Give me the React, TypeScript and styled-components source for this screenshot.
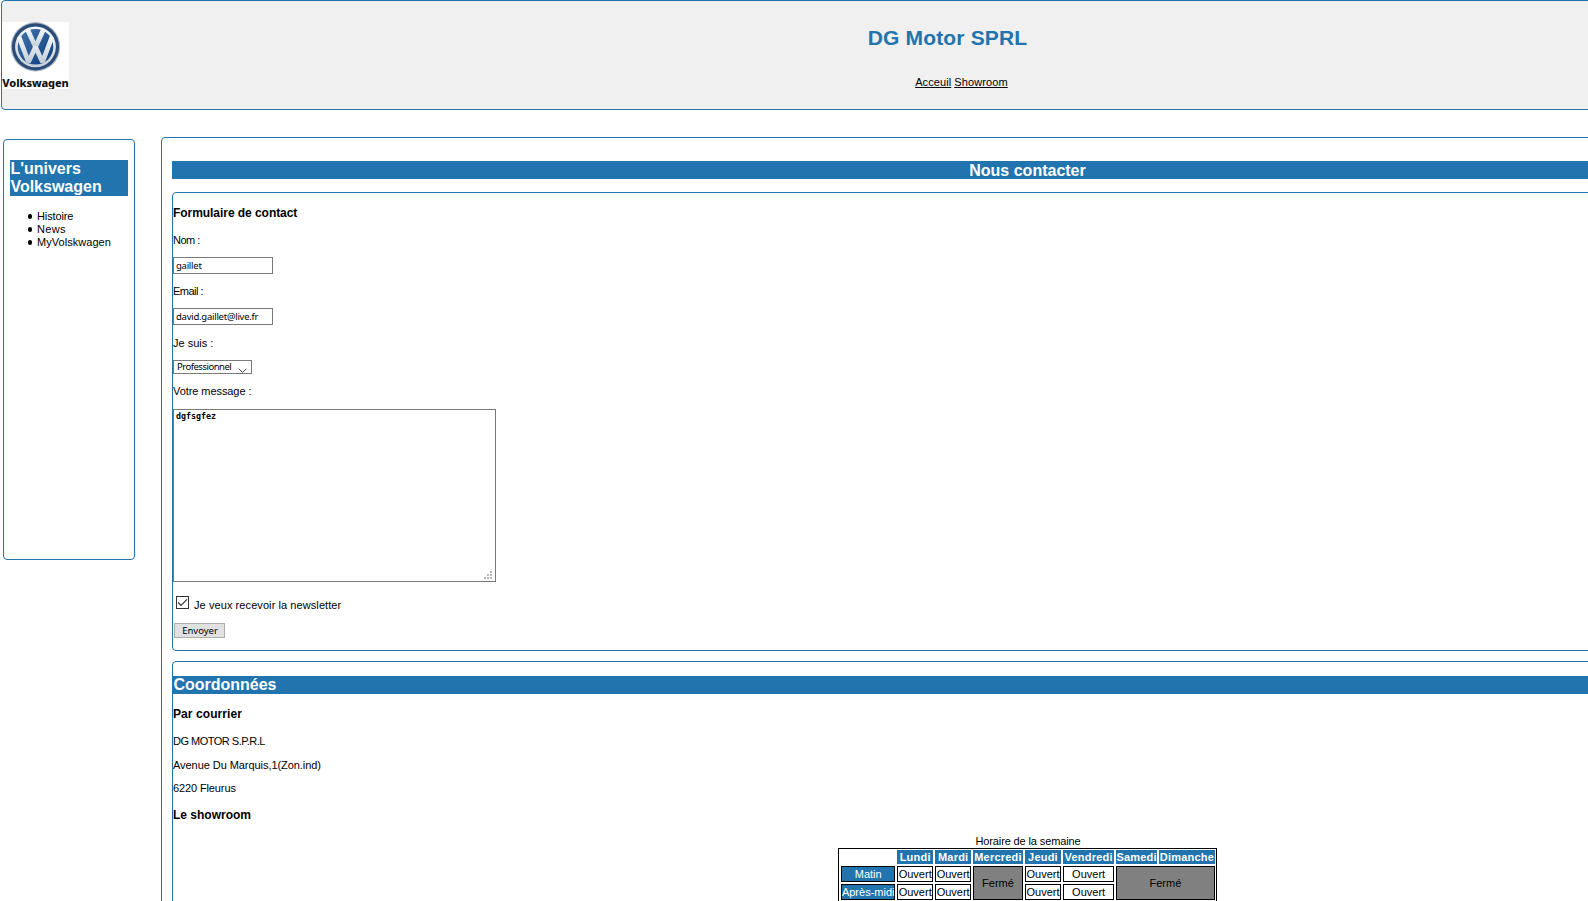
import React from "react";
import styled, { createGlobalStyle } from "styled-components";

const BLUE = "#2174ad";

const GlobalStyle = createGlobalStyle`
  * { box-sizing: border-box; }
  html, body { margin: 0; padding: 0; background: #fff; overflow: hidden; }
  body { font-family: "Liberation Sans", Arial, sans-serif; font-size: 11px; line-height: 12px; color: #000; }
`;

const Page = styled.div`
  width: 100%;
  height: 901px;
  overflow: hidden;
`;

const Header = styled.header`
  display: flex;
  width: 1892px;
  height: 110px;
  margin-left: 1px;
  border: 1px solid ${BLUE};
  border-radius: 4px;
  background: #f0f0f0;
`;

const Logo = styled.svg`
  flex: none;
  display: block;
  width: 67px;
  height: 67px;
  margin-top: 21px;
`;

const HeaderText = styled.div`
  display: flex;
  flex-direction: column;
  align-items: center;
  flex: 1;
  margin-right: 67px;
`;

const SiteTitle = styled.h1<{ $track?: number }>`
  margin: 25px 0 0 1px;
  font-size: 21px;
  line-height: 24px;
  letter-spacing: ${(p) => p.$track ?? 0}px;
  color: ${BLUE};
`;

const Nav = styled.nav`
  display: flex;
  gap: 3px;
  margin: 26px 0 0 29px;
`;

const NavLink = styled.a<{ $track?: number }>`
  color: #000;
  text-decoration: underline;
  letter-spacing: ${(p) => p.$track ?? 0}px;
`;

const Columns = styled.div`
  display: flex;
  align-items: flex-start;
  width: 1893px;
  padding: 27px 0 0 3px;
`;

const Sidebar = styled.aside`
  flex: none;
  width: 132px;
  height: 421px;
  margin: 2px 26px 0 0;
  padding: 20px 6px;
  border: 1px solid ${BLUE};
  border-radius: 4px;
`;

const BarTitle = styled.h2<{ $center?: boolean }>`
  margin: 0;
  padding: ${(p) => (p.$center ? "1px 0 0 1px" : "0 0 0 0.4px")};
  background: ${BLUE};
  color: #fff;
  font-size: 16px;
  line-height: ${(p) => (p.$center ? 17 : 18)}px;
  text-align: ${(p) => (p.$center ? "center" : "left")};
`;

const LinkList = styled.ul`
  margin: 14px 0 0;
  padding: 0 0 0 18px;
  line-height: 13px;
  list-style: none;
`;

const LinkItem = styled.li<{ $track: number }>`
  display: flex;
  align-items: center;
  gap: 4.6px;
  letter-spacing: ${(p) => p.$track}px;
  &::before {
    content: "";
    width: 4.4px;
    height: 4.4px;
    border-radius: 50%;
    background: #000;
  }
`;

const Main = styled.main`
  flex: none;
  width: 1732px;
  height: 900px;
  padding: 23px 10px 0;
  border: 1px solid ${BLUE};
  border-radius: 4px;
`;

const Panel = styled.section<{ $top: number; $height: number }>`
  display: flex;
  flex-direction: column;
  align-items: flex-start;
  height: ${(p) => p.$height}px;
  margin-top: ${(p) => p.$top}px;
  border: 1px solid ${BLUE};
  border-radius: 4px;
  > h2 { align-self: stretch; margin-top: 14px; }
`;

const SubTitle = styled.h4<{ $track?: number; $top?: number; $bottom?: number }>`
  margin: ${(p) => p.$top ?? 13}px 0 ${(p) => p.$bottom ?? 14}px;
  font-size: 12px;
  line-height: 14px;
  letter-spacing: ${(p) => p.$track ?? 0}px;
`;

const Label = styled.label<{ $track?: number; $top?: number; $bottom?: number }>`
  display: block;
  margin: ${(p) => p.$top ?? 0}px 0 ${(p) => p.$bottom ?? 11}px;
  letter-spacing: ${(p) => p.$track ?? 0}px;
`;

const Field = styled.input`
  display: block;
  width: 100px;
  height: 17px;
  padding: 0 2px 1px;
  border: 1px solid #7a7a7a;
  background: #fff;
  font: 9.5px "Noto Sans", sans-serif;
  letter-spacing: -0.25px;
  color: #000;
`;

const SelectBox = styled.div`
  display: flex;
  align-items: center;
  justify-content: space-between;
  width: 79px;
  height: 14px;
  padding: 0 4px 0 3px;
  border: 1px solid #7a7a7a;
  font: 9.5px/12px "Noto Sans", sans-serif;
  letter-spacing: -0.5px;
  svg { margin: 8px 0 0; }
`;

const Message = styled.div`
  display: flex;
  justify-content: space-between;
  width: 323px;
  height: 173px;
  padding: 1px 3px 2px 2px;
  border: 1px solid #7a7a7a;
  font: bold 8.3px/10px "DejaVu Sans Mono", monospace;
  svg { align-self: flex-end; }
`;

const CheckRow = styled.label`
  display: flex;
  gap: 5px;
  margin: 14px 0 0 3px;
  height: 13px;
  letter-spacing: 0.08px;
  span { margin-top: 3px; }
`;

const SubmitButton = styled.button`
  width: 51px;
  height: 15px;
  margin: 14px 0 0 1px;
  padding: 0 0 0 1px;
  border: 1px solid #adadad;
  background: #e1e1e1;
  font: 9.5px/13px "Noto Sans", sans-serif;
  color: #000;
`;

const Line = styled.p<{ $bottom?: number; $track?: number }>`
  margin: 0 0 ${(p) => p.$bottom ?? 0}px;
  letter-spacing: ${(p) => p.$track ?? 0}px;
`;

const Schedule = styled.div`
  align-self: center;
  width: 379px;
  margin-left: 1px;
`;

const Caption = styled.div`
  margin-bottom: 1px;
  padding-left: 1px;
  text-align: center;
  letter-spacing: -0.12px;
`;

const Grid = styled.div`
  display: grid;
  grid-template-columns: 54.4px 36.4px 36.4px 50.1px 36.7px 51.4px 41.4px 56px;
  grid-template-rows: 14px 16px 16px;
  gap: 2px 1.6px;
  width: 379px;
  padding: 1px 1px 1px 2px;
  border: 1px solid #000;
`;

const Cell = styled.div<{ $kind?: "day" | "slot" | "closed"; $cols?: number }>`
  display: flex;
  align-items: center;
  justify-content: center;
  min-width: 0;
  white-space: nowrap;
  border: ${(p) => (p.$kind === "day" ? "0" : "1px solid #000")};
  background: ${(p) => (p.$kind === "closed" ? "#808080" : p.$kind ? BLUE : "#fff")};
  color: ${(p) => (p.$kind === "day" || p.$kind === "slot" ? "#fff" : "#000")};
  font-weight: ${(p) => (p.$kind === "day" ? 700 : 400)};
  letter-spacing: ${(p) => (p.$kind === "day" ? 0.22 : 0)}px;
  grid-column: span ${(p) => p.$cols ?? 1};
  grid-row: span ${(p) => (p.$kind === "closed" ? 2 : 1)};
`;

const DAYS = ["Lundi", "Mardi", "Mercredi", "Jeudi", "Vendredi", "Samedi", "Dimanche"];

export default function App() {
  return (
    <Page>
      <GlobalStyle />
      <Header>
        <Logo viewBox="0 0 67 67">
          <defs>
            <linearGradient id="disc" x1="0" y1="0" x2="1" y2="1">
              <stop offset="0" stopColor="#4274ae" />
              <stop offset="1" stopColor="#0d3d7c" />
            </linearGradient>
            <linearGradient id="chrome" x1="0" y1="0" x2="0" y2="1">
              <stop offset="0" stopColor="#f4f7fa" />
              <stop offset="1" stopColor="#c3ced9" />
            </linearGradient>
          </defs>
          <rect width="67" height="67" fill="#fff" />
          <circle cx="33.5" cy="24.8" r="24.7" fill="#aab4c2" />
          <circle cx="33.5" cy="24.8" r="23.6" fill="#2b4b78" />
          <circle cx="33.5" cy="24.8" r="20.4" fill="url(#chrome)" />
          <circle cx="33.5" cy="24.8" r="17.8" fill="url(#disc)" />
          <g fill="none" stroke="url(#chrome)" strokeWidth="4.8" strokeLinejoin="bevel">
            <path d="M25.5 7.5 L33.5 25 L41.5 7.5" />
            <path d="M17 15 L26.5 40 L33.5 25 L40.5 40 L50 15" />
          </g>
          <text x="0.3" y="64.6" textLength="66.5" fontFamily="Noto Sans" fontWeight="800" fontSize="11" fill="#111">Volkswagen</text>
        </Logo>
        <HeaderText>
          <SiteTitle $track={0.17}>DG Motor SPRL</SiteTitle>
          <Nav>
            <NavLink $track={0.08}>Acceuil</NavLink>
            <NavLink $track={0.12}>Showroom</NavLink>
          </Nav>
        </HeaderText>
      </Header>
      <Columns>
        <Sidebar>
          <BarTitle>L'univers Volkswagen</BarTitle>
          <LinkList>
            <LinkItem $track={-0.12}>Histoire</LinkItem>
            <LinkItem $track={0.3}>News</LinkItem>
            <LinkItem $track={0.05}>MyVolskwagen</LinkItem>
          </LinkList>
        </Sidebar>
        <Main>
          <BarTitle $center>Nous contacter</BarTitle>
          <Panel $top={13} $height={459}>
            <SubTitle $track={-0.05}>Formulaire de contact</SubTitle>
            <Label $track={-0.5}>Nom :</Label>
            <Field defaultValue="gaillet" />
            <Label $top={11} $track={-0.5}>Email :</Label>
            <Field defaultValue="david.gaillet@live.fr" />
            <Label $top={12}>Je suis :</Label>
            <SelectBox>
              Professionnel
              <svg width="9" height="6" viewBox="0 0 9 6">
                <path d="M0.7 0.7 L4.5 4.5 L8.3 0.7" fill="none" stroke="#444" />
              </svg>
            </SelectBox>
            <Label $top={11} $bottom={12} $track={-0.07}>Votre message :</Label>
            <Message>
              dgfsgfez
              <svg width="8" height="8" viewBox="0 0 8 8" fill="#b8b8b8">
                <path d="M6 0h2v2h-2zM3 3h2v2h-2zM6 3h2v2h-2zM0 6h2v2h-2zM3 6h2v2h-2zM6 6h2v2h-2z" />
              </svg>
            </Message>
            <CheckRow>
              <svg width="13" height="13" viewBox="0 0 13 13" fill="none" stroke="#333">
                <rect x="0.5" y="0.5" width="12" height="12" />
                <path d="M2 6.5 L5 9.5 L11 3.3" strokeWidth="1.2" />
              </svg>
              <span>Je veux recevoir la newsletter</span>
            </CheckRow>
            <SubmitButton>Envoyer</SubmitButton>
          </Panel>
          <Panel $top={10} $height={300}>
            <BarTitle>Coordonnées</BarTitle>
            <SubTitle $track={0.08}>Par courrier</SubTitle>
            <Line $bottom={12} $track={-0.5}>DG MOTOR S.P.R.L</Line>
            <Line $bottom={11} $track={-0.06}>Avenue Du Marquis,1(Zon.ind)</Line>
            <Line $track={-0.12}>6220 Fleurus</Line>
            <SubTitle $top={14} $bottom={13}>Le showroom</SubTitle>
            <Schedule>
              <Caption>Horaire de la semaine</Caption>
              <Grid>
                <span />
                {DAYS.map((d) => <Cell key={d} $kind="day">{d}</Cell>)}
                <Cell $kind="slot">Matin</Cell>
                <Cell>Ouvert</Cell>
                <Cell>Ouvert</Cell>
                <Cell $kind="closed">Fermé</Cell>
                <Cell>Ouvert</Cell>
                <Cell>Ouvert</Cell>
                <Cell $kind="closed" $cols={2}>Fermé</Cell>
                <Cell $kind="slot">Après-midi</Cell>
                <Cell>Ouvert</Cell>
                <Cell>Ouvert</Cell>
                <Cell>Ouvert</Cell>
                <Cell>Ouvert</Cell>
              </Grid>
            </Schedule>
          </Panel>
        </Main>
      </Columns>
    </Page>
  );
}
